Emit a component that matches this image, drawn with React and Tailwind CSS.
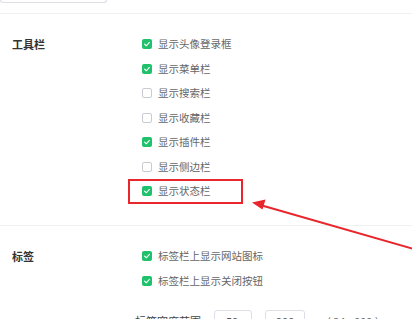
import { Fragment } from "react";

const toolbarOptions = [
  { label: "显示头像登录框", checked: true },
  { label: "显示菜单栏", checked: true },
  { label: "显示搜索栏", checked: false },
  { label: "显示收藏栏", checked: false },
  { label: "显示插件栏", checked: true },
  { label: "显示侧边栏", checked: false },
  { label: "显示状态栏", checked: true, highlight: true },
];

const tabOptions = [
  { label: "标签栏上显示网站图标", checked: true },
  { label: "标签栏上显示关闭按钮", checked: true },
];

function Checkbox({ checked }) {
  if (checked) {
    return (
      <span className="flex h-[10px] w-[10px] shrink-0 items-center justify-center rounded-[2px] bg-[#1fc26a]">
        <svg viewBox="0 0 10 10" className="h-[8px] w-[8px]" fill="none">
          <path d="M2 5.2 4.1 7.2 8 3" stroke="#fff" strokeWidth="1.4" strokeLinecap="round" strokeLinejoin="round" />
        </svg>
      </span>
    );
  }
  return <span className="h-[10px] w-[10px] shrink-0 rounded-[2px] border border-[#c8cbd1] bg-white" />;
}

function OptionRow({ label, checked, highlight }) {
  return (
    <div className="relative flex h-[24.5px] items-center gap-[6px]">
      <Checkbox checked={checked} />
      <span className="text-[10.5px] text-[#666]">{label}</span>
      {highlight && (
        <div className="absolute left-[-14px] top-[0px] h-[25px] w-[115px] border-2 border-[#e8262b]" />
      )}
    </div>
  );
}

function Section({ title, options, children, className }) {
  return (
    <div className={`flex px-3 ${className}`}>
      <div className="w-[130px] shrink-0">
        <div className="flex h-[24.5px] items-center text-[11px] font-bold text-[#333]">{title}</div>
      </div>
      <div className="flex flex-col">
        {options.map((opt) => (
          <Fragment key={opt.label}>
            <OptionRow {...opt} />
          </Fragment>
        ))}
        {children}
      </div>
    </div>
  );
}

export default function App() {
  return (
    <div
      className="relative h-[319px] w-[412px] overflow-hidden bg-white"
      style={{ fontFamily: '"Noto Sans CJK SC", "Noto Sans", sans-serif' }}
    >
      {/* bottom edge of the field above */}
      <div className="h-[3px] w-[107px] rounded-b-[3px] border border-t-0 border-[#dcdfe6]" />
      <div className="mt-[10px] h-px bg-[#f0f0f0]" />

      <Section title="工具栏" options={toolbarOptions} className="pt-[18px] pb-[21px]" />

      <div className="h-px bg-[#f0f0f0]" />

      <Section title="标签" options={tabOptions} className="pt-[18.5px]">
        <div className="ml-[-7px] mt-[17px] flex h-[22px] items-center text-[11px] text-[#444]">
          <span>标签宽度范围</span>
          <span className="ml-[13px] flex h-[22px] w-[38px] items-center rounded-[3px] border border-[#dcdfe6] pl-[11px] text-[#555]">50</span>
          <span className="ml-[13px] flex h-[22px] w-[40px] items-center rounded-[3px] border border-[#dcdfe6] pl-[10px] text-[#555]">200</span>
          <span className="ml-[22px] text-[#666]">( 24 - 999 )</span>
        </div>
      </Section>

      <svg className="pointer-events-none absolute left-0 top-0" width="412" height="319" viewBox="0 0 412 319">
        <line x1="414" y1="249" x2="262" y2="205.5" stroke="#e8262b" strokeWidth="2" />
        <path d="M252 202.5 265.5 199.5 262.5 209.5Z" fill="#e8262b" />
      </svg>
    </div>
  );
}
